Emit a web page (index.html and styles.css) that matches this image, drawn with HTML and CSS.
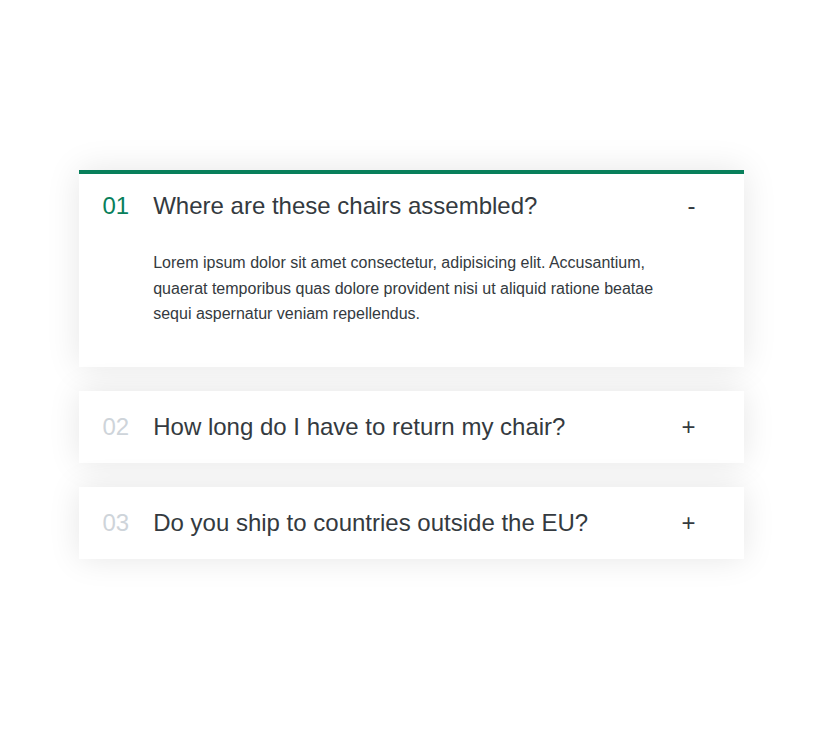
FILE: index.html
```
<!DOCTYPE html>
<html lang="en">
<head>
<meta charset="utf-8">
<title>Accordion</title>
<link rel="stylesheet" href="styles.css">
</head>
<body>
  <div class="accordion">
    <div class="item open">
      <p class="number">01</p>
      <p class="title">Where are these chairs assembled?</p>
      <p class="icon">-</p>
      <div class="content-box">
        <p>Lorem ipsum dolor sit amet consectetur, adipisicing elit. Accusantium, quaerat temporibus quas dolore provident nisi ut aliquid ratione beatae sequi aspernatur veniam repellendus.</p>
      </div>
    </div>
    <div class="item">
      <p class="number">02</p>
      <p class="title">How long do I have to return my chair?</p>
      <p class="icon">+</p>
    </div>
    <div class="item">
      <p class="number">03</p>
      <p class="title">Do you ship to countries outside the EU?</p>
      <p class="icon">+</p>
    </div>
  </div>
</body>
</html>
```
FILE: styles.css
```
* {
  margin: 0;
  padding: 0;
  box-sizing: border-box;
}

html,
body {
  min-height: 100%;
}

body {
  font-family: "Liberation Sans", Arial, sans-serif;
  color: #343a40;
  background: #fff;
  padding: 170px 0 170px;
}

.accordion {
  width: 665px;
  margin: 0 auto;
  display: flex;
  flex-direction: column;
  gap: 24px;
}

.item {
  box-shadow: 0 0 32px rgba(0, 0, 0, 0.1);
  background: #fff;
  padding: 20px 48px 20px 24px;
  border-top: 4px solid #fff;
  border-bottom: 4px solid #fff;
  display: grid;
  grid-template-columns: auto 1fr auto;
  column-gap: 24px;
  row-gap: 32px;
  align-items: center;
}

.number,
.title,
.icon {
  font-size: 24px;
  line-height: 24px;
}

.number {
  color: #ced4da;
}

.open {
  border-top-color: #087f5b;
}

.open .number {
  color: #087f5b;
}

.content-box {
  grid-column: 2 / -1;
  padding-bottom: 16px;
}

.content-box p {
  font-size: 16px;
  line-height: 1.6;
}
```
